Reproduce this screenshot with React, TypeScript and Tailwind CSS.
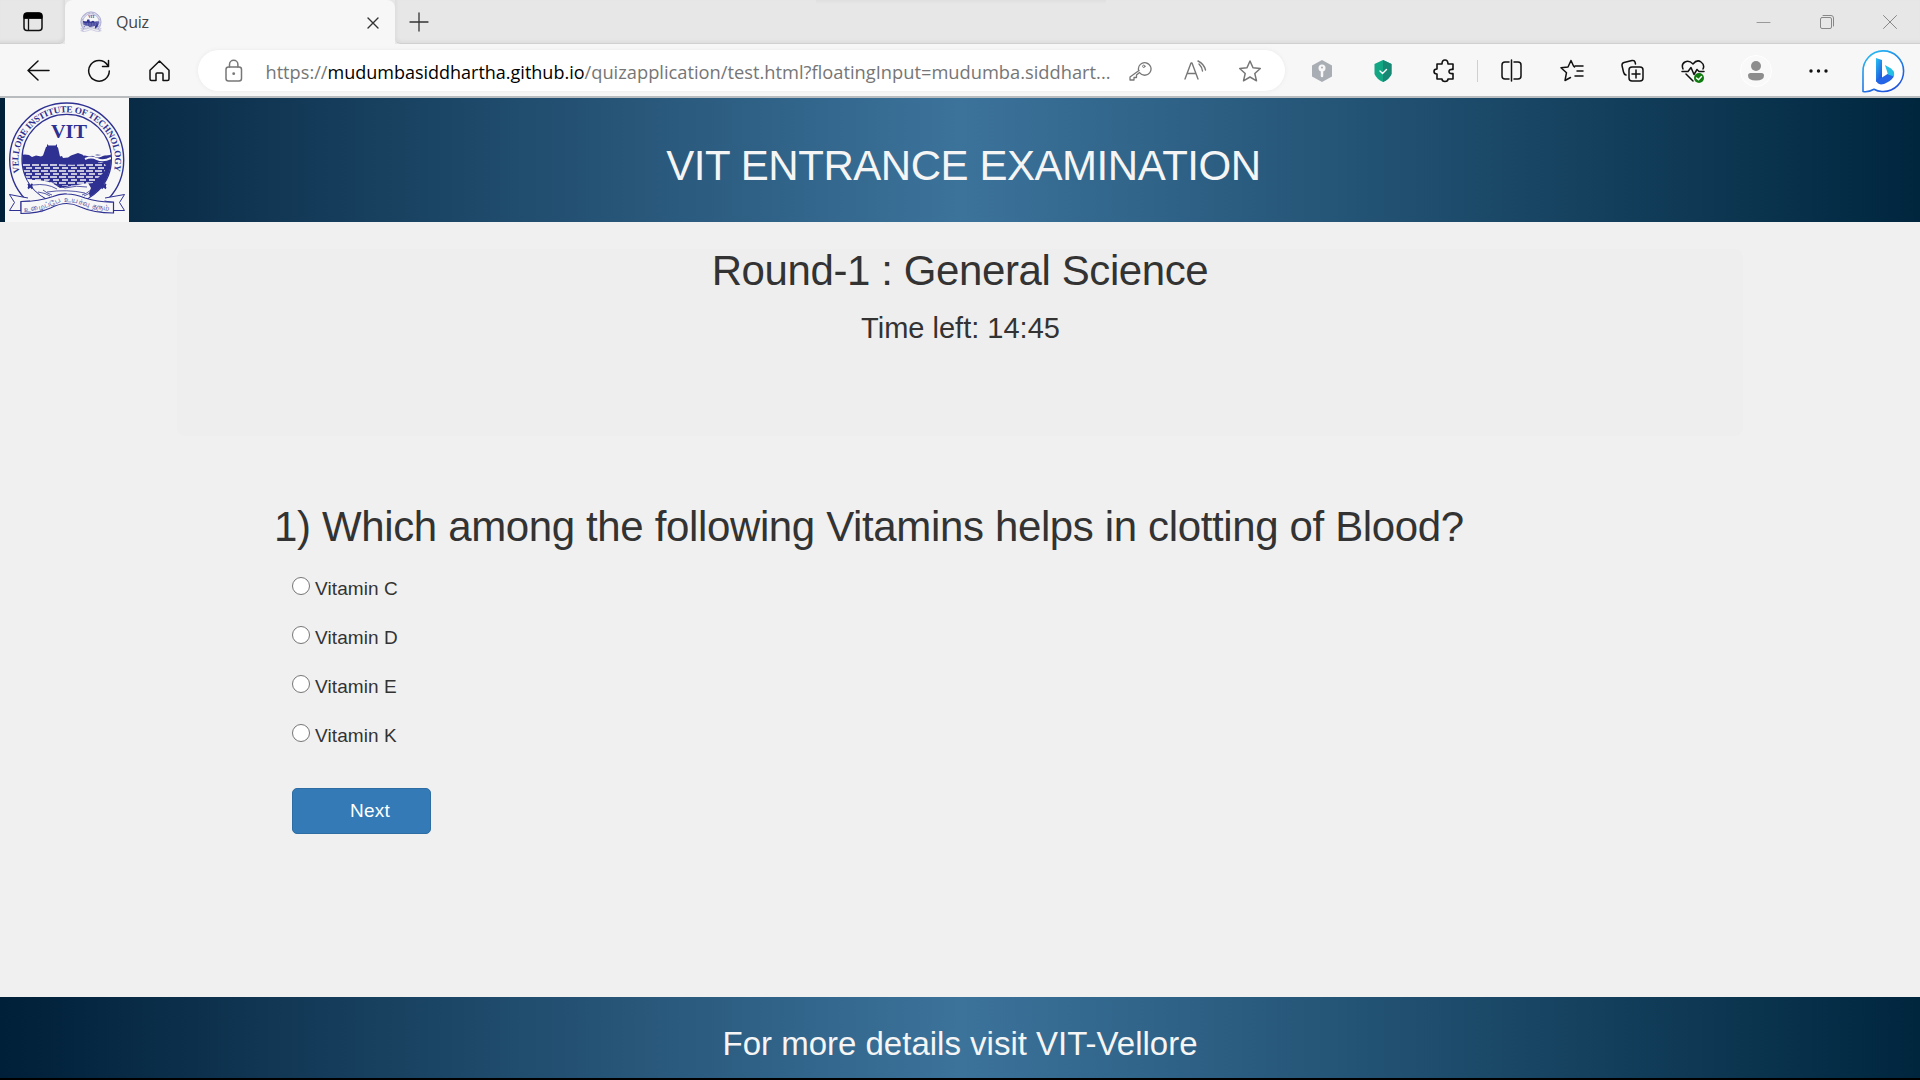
import React from "react";

const I = ({ s = 24, x = "", children }: { s?: number; x?: string; children: React.ReactNode }) => (
  <svg width={s} height={s} viewBox={`0 0 ${s} ${s}`} fill="none" strokeLinecap="round" strokeLinejoin="round" className={"shrink-0 " + x}>{children}</svg>
);

function Seal({ size, lettered = false }: { size: number; lettered?: boolean }) {
  const c = "#2e3192";
  return (
    <svg width={size} height={size} viewBox="0 0 124 124" fill="none" className="shrink-0">
      <defs>
        <clipPath id="disc"><circle cx="61.7" cy="61" r="44.500" /></clipPath>
        <clipPath id="upper"><path d="M0 0h124v101H0z" /></clipPath>
        <path id="ring" d="M14.900 74.500 A48.300 48.300 0 1 1 108.500 74.500" />
        <path id="motto" d="M19 113.500 Q38 113 52 105.500 Q62 102 74 106 Q88 111.500 107 112.500" />
        <pattern id="waves" width="9" height="6" patternUnits="userSpaceOnUse">
          <path d="M0 1h7M3 4h7" stroke="#f7f7f7" strokeWidth="1.3" />
        </pattern>
      </defs>
      <g clipPath="url(#upper)">
        <circle cx="61.7" cy="62" r="57" stroke={c} strokeWidth={lettered ? 1.4 : 4} opacity={lettered ? 1 : 0.5} />
        {!lettered && <circle cx="61.7" cy="62" r="50" stroke={c} strokeWidth="7" strokeDasharray="5 3" opacity=".35" />}
        <circle cx="61.7" cy="61" r="44.700" stroke={c} strokeWidth="1.300" />
        <g clipPath="url(#disc)">
          <path d="M15 57l5-.5 4 .5 3 2 4-1.500 5 1 2-1L41 49l1-.500V46l1.500 1.500h7L52 46v3l1 .5 2 9 2-.5 1 2 5-.5 3-2 7-2.500 7 2.500 4 1 8-2 9 1 7-1v60q-22 0-42-4Q35 90 15 75z" fill={c} />
          <path d="M16 66h36q24 2 44-2 8 2 3 10l-11 11-24 3-38-2-10-8z" fill="url(#waves)" />
          <path d="M78 57q5-3 10 0t10 0 8-1M80 61q6-3 12 0t14-1" stroke="#f7f7f7" strokeWidth="2" />
          <path d="M16 82q20-1 31 3l8 5 28-5 3 5-2 5 2 10H30z" fill="#f7f7f7" />
          <path d="M28 87q14-2 24 4M44 82q8 6 16 8M42 94q20-3 38 1M60 90q12-3 22-1" stroke={c} strokeWidth=".8" />
        </g>
      </g>
      <path d="M23 86l4.500 4.500m0-4.500L23 90.500M23 88.200h4.500M96.500 86l4.500 4.500m0-4.500l-4.500 4.500M96.500 88.200h4.500" stroke={c} strokeWidth="1.800" />
      <path d="M33 94q8 1 12 4M91 94q-8 1-12 4M38 92q5 4 9 5M86 92q-5 4-9 5" stroke={c} strokeWidth=".8" />
      <path d="M23 100L4.500 96.500l5 8-5 8 11.500 0v-9l9-.500M100 100l19.500-3.500-5 8 5 8-11 0v-8l-9-1.500" fill="#f7f7f7" stroke={c} strokeWidth="1" />
      <path d="M16 103.500q18 0 32-5 7-3 14-2.500 8 0 18 4 14 4.500 28.500 4v11q-20 0-33-6-7-3.500-14-3.500t-16 4.500q-12 5.500-29.500 5.500z" fill="#f7f7f7" stroke={c} strokeWidth="1.200" />
      {lettered && (
        <text fontFamily="Liberation Serif, serif" fontWeight="700" fontSize="9.2" fill={c}>
          <textPath href="#ring" textLength="174">VELLORE INSTITUTE OF TECHNOLOGY</textPath>
        </text>
      )}
      <text x="64" y="40" textAnchor="middle" textLength="36" lengthAdjust="spacingAndGlyphs" fontFamily="Liberation Serif, serif" fontWeight="700" fontSize="19.5" fill={c}>VIT</text>
      {lettered && (
        <text fontFamily="Noto Sans, sans-serif" fontSize="7.600" fill={c}>
          <textPath href="#motto" textLength="88" lengthAdjust="spacingAndGlyphs">உழைப்பே உயர்வு தரும்</textPath>
        </text>
      )}
    </svg>
  );
}

function TabStrip() {
  return (
    <div className="flex h-11 bg-[#e7e7e7]">
      <div className="flex w-[65px] items-center rounded-br-md border-b border-[#d0d0d0] pl-[22px] shadow-[inset_-2px_-2px_3px_#d9d9d9]">
        <I s={22}>
          <rect x="2" y="2" width="18" height="17.500" rx="3" stroke="#111" strokeWidth="1.500" />
          <path d="M2 7V5q0-3 3-3h12q3 0 3 3v2z" fill="#000" stroke="#000" /><path d="M6.500 7v12" stroke="#111" strokeWidth="1.300" />
        </I>
      </div>
      <div className="flex w-[330px] items-center rounded-t-lg bg-[#f7f7f7] pl-[15px]">
        <Seal size={22} />
        <span className="ml-[14px] w-[250px] font-['Open_Sans',sans-serif] text-[16px] tracking-[-0.3px] text-[#444]">Quiz</span>
        <I s={14} x="mt-px"><path d="M2 2l10 10M12 2L2 12" stroke="#333" strokeWidth="1.400" /></I>
      </div>
      <div className="flex grow items-center rounded-bl-md border-b border-[#d0d0d0] pl-[13px] shadow-[inset_2px_-2px_3px_#dedede]">
        <I s={22}><path d="M11 2v18M2 11h18" stroke="#333" strokeWidth="1.300" /></I>
        <div className="ml-[386px] h-1 w-[290px] self-start bg-linear-to-b from-[#dfdfdf] to-[#e7e7e7]" />
        <div className="grow" />
        <I s={16} x="mr-[47px]"><path d="M1 8.500h13" stroke="#999" /></I>
        <I s={16} x="mr-[47px]"><rect x="1.500" y="3.500" width="11" height="11" rx="1.500" stroke="#888" /><path d="M4 1.500h8q2.500 0 2.500 2.500v8" stroke="#888" /></I>
        <I s={16} x="mr-[22px]"><path d="M1.500 1.500l13 13M14.500 1.500l-13 13" stroke="#888" /></I>
      </div>
    </div>
  );
}

const K = "#111";
function Toolbar() {
  return (
    <div className="flex h-[52px] items-center bg-[#f7f7f7] pt-px pl-[26px]">
      <I x="mr-[37px]"><path d="M23 11.500H2M12 2L2 11.500 12 21" stroke={K} strokeWidth="1.500" /></I>
      <I x="mr-[36px]"><path d="M20.500 6A10.300 10.300 0 1 0 22.300 12M21.500 1.500v6h-6" stroke={K} strokeWidth="1.500" /></I>
      <I x="mr-[27px]"><path d="M3 11.200L12.500 2l9.500 9.200V20q0 1.500-1.500 1.500H16V15q0-1-1-1h-5q-1 0-1 1v6.500H4.500Q3 21.500 3 20z" stroke={K} strokeWidth="1.500" /></I>
      <div className="flex h-[41px] w-[1087px] items-center rounded-full bg-white pl-[24px] shadow-[0_0_4px_#e9e9e9]">
        <I x="mr-[19px]"><rect x="4" y="8" width="15.500" height="14" rx="2.500" stroke="#777" strokeWidth="1.500" /><path d="M7.500 8V5.500a4.200 4.200 0 0 1 8.400 0V8" stroke="#777" strokeWidth="1.500" /><circle cx="11.700" cy="14.700" r="1.400" fill="#777" /></I>
        <svg width="849" height="40" className="shrink-0" fontFamily="Open Sans, sans-serif" fontSize="18">
          <text x="0.500" y="27.500" fill="#767676" textLength="62" lengthAdjust="spacingAndGlyphs">https://</text>
          <text x="62.500" y="27.500" fill="#000" textLength="257" lengthAdjust="spacingAndGlyphs">mudumbasiddhartha.github.io</text>
          <text x="319.500" y="27.500" fill="#767676" textLength="526" lengthAdjust="spacingAndGlyphs">/quizapplication/test.html?floatingInput=mudumba.siddhart...</text>
        </svg>
        <I x="ml-[14px] mr-[32px]"><path d="M11 12.500L2 19v3h4v-2.500h2.500V17l3-2.500a6.300 6.300 0 1 0-1-2.500z" transform="translate(0 -1)" stroke="#777" strokeWidth="1.300" /><circle cx="15.800" cy="7.300" r="1.200" stroke="#777" /></I>
        <I x="mr-[30px]"><path d="M1 20L7 4h1l6 16M3.500 14.500H12M15 5q3 3 3.500 7M14 2q6 3 7.500 9" stroke="#777" strokeWidth="1.400" /></I>
        <I><path d="M12 2l3 6.800 7.300.7-5.500 5 1.700 7.300L12 18l-6.500 3.800 1.700-7.300-5.500-5 7.300-.7z" stroke="#777" strokeWidth="1.500" /></I>
      </div>
      <I x="ml-[25px] mr-[37px]"><path d="M12 1l10 5.500v11L12 23 2 17.500v-11z" fill="#a9adb4" /><circle cx="12" cy="9" r="3.500" fill="#f7f7f7" /><path d="M12 10v7" stroke="#f7f7f7" strokeWidth="2.500" /><circle cx="12" cy="8.500" r="1" fill="#a9adb4" /></I>
      <I x="mr-[37px]"><path d="M12 1l8.500 4v10q-2 5-8.500 8-6.500-3-8.500-8V5z" fill="#12a683" /><path d="M12 1l8.500 4v10q-2 5-8.500 8z" fill="#168873" /><path d="M9 12l2.500 2.500 4-4" stroke="white" strokeWidth="1.400" /></I>
      <I x="mr-[20px] ml-px"><path d="M4 5h5q0-4 3-4t3 4h5v5.500q-4-.5-4 2t4 2V20h-5q0 2.500-3 2.500T9 20H4v-5q-3 0-3-2.500T4 10z" stroke={K} strokeWidth="1.600" /></I>
      <div className="mr-[22px] h-[22px] w-px bg-[#d0d0d0]" />
      <I x="mr-[36px]"><path d="M9 3H5Q2 3 2 6v11q0 3 3 3h4M14 3h4q3 0 3 3v11q0 3-3 3h-4M11.500 1v21" stroke={K} strokeWidth="1.500" /></I>
      <I x="mr-[37px]"><path d="M15 7h8M17 12h6M15 17h8M13.500 7L11 1.500 8 8l-7 .7 5.500 5L5 21.500l5.500-3M13.500 7l1 1" stroke={K} strokeWidth="1.500" /></I>
      <I x="mr-[36px]"><rect x="8" y="8" width="14" height="14" rx="3" stroke={K} strokeWidth="1.500" /><path d="M15 11v8M11 15h8M5 16Q3 15.500 2.500 13L1 6.500Q.8 4 3 3.500l8-2q2.500-.5 3 1.500l.5 2" stroke={K} strokeWidth="1.500" /></I>
      <I x="mr-[35px]"><path d="M2 10Q0 5 4 3t8 2q4-5 8-2t2 7M1 12.500h6l3-4 3 7 3-5 2 2h5M5 15l7 7" stroke={K} strokeWidth="1.500" /><circle cx="18" cy="19" r="5" fill="#107c10" /><path d="M15.500 19l2 1.800 3-3.300" stroke="white" strokeWidth="1.400" /></I>
      <div className="mr-[34px] flex size-8 shrink-0 items-center justify-center rounded-full border border-white bg-[#f9f9f9]">
        <I s={20}><circle cx="10" cy="5" r="5" fill="#8d8d8d" /><path d="M4.500 12h11Q18 12 18 14.500q0 5-8 5t-8-5Q2 12 4.500 12z" fill="#8d8d8d" /></I>
      </div>
      <I x="mr-[29px]"><g fill={K}><circle cx="5" cy="12" r="1.700" /><circle cx="12.500" cy="12" r="1.700" /><circle cx="20" cy="12" r="1.700" /></g></I>
      <I s={46} x="ml-px">
        <defs>
          <linearGradient id="bb" x1="0" y1="0" x2=".6" y2="1"><stop stopColor="#27c4f5" /><stop offset="1" stopColor="#2054dc" /></linearGradient>
        </defs>
        <path d="M3 43.500V24A20.300 20.300 0 1 1 23 43.500q-5 .3-9-2.200Q8 44.500 3 43.500z" fill="white" stroke="url(#bb)" strokeWidth="1.600" />
        <path d="M16 10l6 2v19l-6 3z" fill="url(#bb)" /><path d="M16 32q1 4 5 4.500 3 0 6-2 6-3 7-7 0-3-1-5l-11 7z" fill="#2464e6" /><path d="M25 17l6 3.500q4 3 3 8l-6-2z" fill="#25bfe5" />
      </I>
    </div>
  );
}

const options = ["Vitamin C", "Vitamin D", "Vitamin E", "Vitamin K"];

export default function App() {
  return (
    <div className="flex h-[1080px] w-[1920px] flex-col overflow-hidden bg-[#f0f0f0] font-['Liberation_Sans',Arial,sans-serif] text-[#333]">
      <TabStrip />
      <Toolbar />
      <header className="flex h-[126px] shrink-0 border-t-2 border-[#b9bcbe] bg-[linear-gradient(90deg,#001f38_0%,#3c739b_50%,#00263e_100%)] pl-[5px]">
        <div className="flex size-[124px] shrink-0 bg-[#f7f7f7]"><Seal size={124} lettered /></div>
        <h1 className="mr-[122px] grow pt-[43px] text-center text-[42px] leading-[50px] tracking-[-0.45px] text-[#f5f5f5]">VIT ENTRANCE EXAMINATION</h1>
      </header>
      <main className="flex grow flex-col">
        <section className="mx-[177px] mt-[27px] h-[187px] rounded-lg bg-[#eeeeee] text-center">
          <h2 className="text-[42px] leading-[44px] tracking-[-0.4px]">Round-1 : General Science</h2>
          <p className="mt-[17px] pl-px text-[29px] leading-[36px]">Time left: 14:45</p>
        </section>
        <section className="ml-[274px] mt-[68px]">
          <h2 className="text-[42px] leading-[46px] tracking-[-0.36px] whitespace-nowrap">1) Which among the following Vitamins helps in clotting of Blood?</h2>
          <div className="ml-[18px] mt-[14px]">
            {options.map((o) => (
              <label key={o} className="flex h-[49px] items-center text-[19px] tracking-[0.1px]">
                <span className="mb-[5px] mr-[5px] size-[18px] rounded-full border border-[#767676] bg-white" /><span className="pt-px">{o}</span>
              </label>
            ))}
            <button className="mt-[28px] block h-[46px] w-[139px] rounded-[5px] border border-[#2e6da4] bg-[#337ab7] pl-[17px] text-[19px] tracking-[0.2px] text-white">Next</button>
          </div>
        </section>
      </main>
      <footer className="h-[83px] shrink-0 border-b-2 border-black bg-[linear-gradient(90deg,#001f38_0%,#3c739b_50%,#00263e_100%)] pt-[27px] text-center text-[33px] leading-[40px] text-[#f5f5f5]">For more details visit VIT-Vellore</footer>
    </div>
  );
}
